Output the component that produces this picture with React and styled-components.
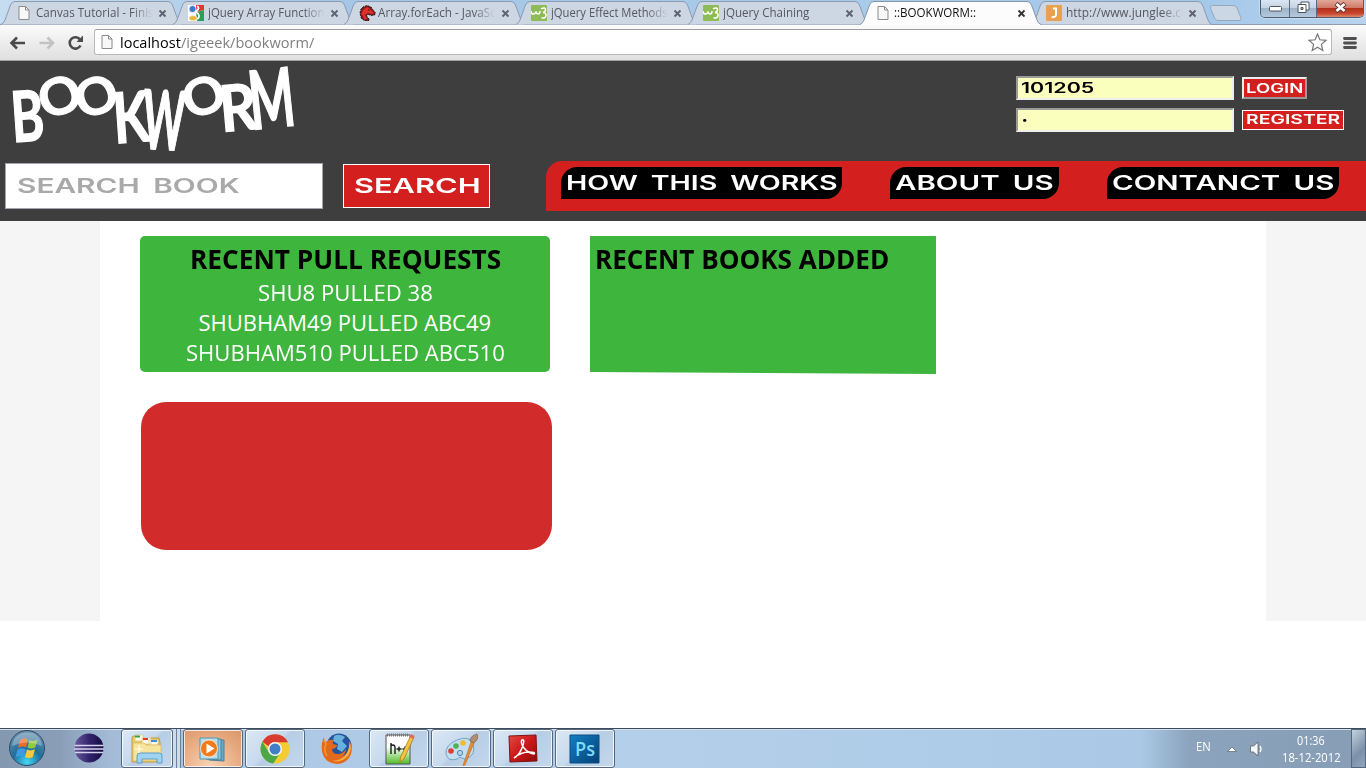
import React, { useLayoutEffect, useRef, useState } from "react";
import styled, { createGlobalStyle } from "styled-components";

const Global = createGlobalStyle`
  * { box-sizing: border-box; }
  body { margin: 0; background: #fff; font-family: "Open Sans", sans-serif; overflow: hidden; }
  svg { display: block; flex: none; }
`;

/* Text stretched horizontally to an exact width */
const FitBox = styled.span`
  display: block;
  flex: none;
  width: ${(p) => p.$w}px;
  white-space: nowrap;
`;
const FitInner = styled.span`
  display: inline-block;
  transform-origin: 0 50%;
`;
function Fit({ w, children }) {
  const ref = useRef(null);
  const [scale, setScale] = useState(1);
  useLayoutEffect(() => {
    setScale(w / ref.current.offsetWidth);
  }, [w]);
  return (
    <FitBox $w={w}>
      <FitInner ref={ref} style={{ transform: `scaleX(${scale})` }}>{children}</FitInner>
    </FitBox>
  );
}

const Page = styled.div`
  width: 1366px;
  height: 768px;
  display: flex;
  flex-direction: column;
`;

/* ---------- browser chrome ---------- */
const TabStrip = styled.div`
  height: 25px;
  display: flex;
  padding-left: 1px;
  position: relative;
  background: linear-gradient(90deg, #c5dcf1 0, #a5c6e6 25%, #a9cbea 60%, #a4c8ea 88%, #b9d3ec 100%);
  box-shadow: inset 0 -1px #8f9bab;
`;
const TabBox = styled.div`
  position: relative;
  width: 181px;
  height: 25px;
  margin-right: -9.3px;
  z-index: ${(p) => (p.$active ? 2 : 1)};
  flex: none;
`;
const TabShape = styled.svg`
  position: absolute;
  inset: 0;
`;
const TabContent = styled.div`
  position: relative;
  height: 25px;
  display: flex;
  align-items: center;
  padding: 1px 16px 0 15px;
`;
const TabTitle = styled.div`
  width: 118px;
  margin-left: ${(p) => p.$gap}px;
  overflow: hidden;
  font-size: 12px;
  line-height: 18px;
  color: ${(p) => (p.$active ? "#111" : "#56595f")};
  ${(p) => p.$fade && "mask-image: linear-gradient(90deg, #000 96px, transparent 117px);"}
`;
const CloseSlot = styled.div`
  margin-left: auto;
  margin-right: -1px;
`;
const NewTab = styled.svg`
  margin: 5px 0 0 6px;
`;
const WindowButtons = styled.div`
  position: absolute;
  right: 2px;
  top: 0;
  z-index: 3;
  height: 18px;
  width: 104px;
  display: flex;
  border: 1px solid #4e5e70;
  border-top: 0;
  border-radius: 0 0 5px 5px;
  overflow: hidden;
  box-shadow: 0 0 2px #fff;
`;
const WindowButton = styled.div`
  width: ${(p) => p.$w}px;
  display: flex;
  justify-content: center;
  align-items: center;
  padding-bottom: ${(p) => (p.$low ? 0 : 2)}px;
  border-left: ${(p) => (p.$sep ? "1px solid #5c6b7c" : "0")};
  background: ${(p) =>
    p.$close
      ? "linear-gradient(#e2a79a 0, #d07a68 45%, #b5301a 50%, #c9482e 80%, #e0886a 100%)"
      : "linear-gradient(#dbe6f1 0, #c4d3e3 45%, #9fb4ca 50%, #b5c9dd 100%)"};
`;
const Toolbar = styled.div`
  height: 36px;
  display: flex;
  align-items: center;
  padding: 0 9px;
  background: linear-gradient(#fbfbfb, #dfdfdf);
  border-bottom: 1px solid #a2a4a3;
`;
const AddressBar = styled.div`
  width: 1238px;
  height: 26px;
  margin: 0 11px 1px 9px;
  display: flex;
  align-items: center;
  padding: 0 4px 0 4px;
  background: #fff;
  border: 1px solid #b9b9b9;
  border-top-color: #9d9d9d;
  border-radius: 3px;
`;
const Address = styled.div`
  display: flex;
  flex: 1;
  margin-left: 5px;
  font-size: 15px;
  line-height: 22px;
  color: #808080;
  b { font-weight: 400; color: #000; }
`;

const PageIcon = () => (
  <svg width="16" height="16" viewBox="0 0 16 16">
    <path d="M3 1.5h6.5l3.5 3.5v9.5H3z" fill="#f8f8f8" stroke="#8b8b8b" />
    <path d="M9.5 1.5V5H13" fill="none" stroke="#8b8b8b" />
  </svg>
);
const GoogleIcon = () => (
  <svg width="16" height="16" viewBox="0 0 16 16">
    <rect width="16" height="16" fill="#fff" />
    <path d="M8 0h8v5L8 7z" fill="#e8332e" />
    <path d="M8 7l8-2v11H9z" fill="#2e9d58" />
    <path d="M0 4l6 3-2 4-4 1z" fill="#fff" />
    <circle cx="4.5" cy="4" r="3.5" fill="#3b78d8" stroke="#fff" strokeWidth=".7" />
    <path d="M9 1q3 2 0 4.500q-2 1 1 3q3 4-2 6" fill="none" stroke="#fff" strokeWidth="1.8" />
    <ellipse cx="5" cy="13.2" rx="4" ry="2.600" fill="#e8b43a" stroke="#fff" strokeWidth=".6" />
  </svg>
);
const DinoIcon = () => (
  <svg width="17" height="16" viewBox="0 0 17 16">
    <path d="M1 8l1-4 2-2 4-1.500 4 1.500 2 3 2.500 3-1 2-3 .5-3-1-2 1 1 2 2 2-2 2-3-1-3-2-1-3z" fill="#7d1a1a" stroke="#2b1a1a" strokeDasharray="2 1" />
    <path d="M4 5l4-3 3 2 4 4-2 1-4-1-3 2 2 4-3 .5-1-4-2-1z" fill="#df2f2d" />
    <path d="M9 5h1.500" stroke="#2b1a1a" />
  </svg>
);
const W3Icon = () => (
  <svg width="16" height="16" viewBox="0 0 16 16">
    <rect width="16" height="16" rx="1" fill="#8dbb55" />
    <path d="M0 6q.5 3.500 2.500 3Q4.500 9 4.800 6.500 5.500 9 7 9q2 0 2-3" fill="none" stroke="#fff" strokeWidth="1.500" />
    <path d="M10 3.800q4.500-2 4.500.8 0 2.500-2.500 2.800 3.200.2 3 3-.5 3.600-4.500 2.300" fill="none" stroke="#fff" strokeWidth="1.600" />
  </svg>
);
const JungleeIcon = () => (
  <svg width="16" height="16" viewBox="0 0 16 16">
    <rect width="16" height="16" rx="1" fill="#e9a04f" />
    <path d="M7 3.500h3v6q0 3-4.500 2.800" fill="none" stroke="#fff" strokeWidth="2" />
  </svg>
);
const CloseMark = ({ active }) => (
  <svg width="9" height="9" viewBox="0 0 9 9">
    <path d="M1.500 1.500l6 6M7.500 1.500l-6 6" stroke={active ? "#333" : "#5c626b"} strokeWidth="1.800" />
  </svg>
);

const TABS = [
  { icon: <PageIcon />, title: "Canvas Tutorial - Finis", w: 118, fade: true },
  { icon: <GoogleIcon />, title: "jQuery Array Functions", w: 122, fade: true },
  { icon: <DinoIcon />, title: "Array.forEach - JavaSc", w: 118, fade: true, gap: 2 },
  { icon: <W3Icon />, title: "jQuery Effect Methods", w: 117, fade: true },
  { icon: <W3Icon />, title: "jQuery Chaining", w: 86 },
  { icon: <PageIcon />, title: "::BOOKWORM::", w: 82, active: true, gap: 3 },
  { icon: <JungleeIcon />, title: "http://www.junglee.co", w: 122, fade: true },
];

function Tab({ icon, title, w, fade, active, gap = 4 }) {
  return (
    <TabBox $active={active}>
      <TabShape width="181" height="25" viewBox="0 0 181 25">
        <path
          d="M0 24.500Q3 23 4 20L9.500 5Q11 1.500 14 1.500H167Q170 1.500 171.500 5L177 20Q178 23.500 181 24.500"
          fill={active ? "#fcfcfc" : "#cdd6e3"}
          stroke={active ? "#8896a8" : "#8b9bb0"}
        />
        {active && <path d="M1 24.500H180" stroke="#fcfcfc" />}
      </TabShape>
      <TabContent>
        {icon}
        <TabTitle $gap={gap} $fade={fade} $active={active}>
          <Fit w={w}>{title}</Fit>
        </TabTitle>
        <CloseSlot><CloseMark active={active} /></CloseSlot>
      </TabContent>
    </TabBox>
  );
}

/* ---------- site header ---------- */
const Header = styled.header`
  height: 160px;
  background: #3e3e3e;
  display: flex;
  flex-direction: column;
`;
const HeaderTop = styled.div`
  height: 100px;
  display: flex;
  justify-content: space-between;
`;
const LogoText = styled.svg`
  overflow: visible;
  font-family: Lato, sans-serif;
  font-weight: 700;
  font-size: 100px;
  fill: #fff;
  stroke: #fff;
  stroke-width: 2px;
`;
const LoginForm = styled.form`
  width: 350px;
  padding-top: 15px;
  display: flex;
  flex-direction: column;
  gap: 8px;
`;
const FormRow = styled.div`
  height: 24px;
  display: flex;
  align-items: center;
  gap: 8px;
`;
const wide = `
  font-family: Inter, sans-serif;
  font-weight: 600;
  word-spacing: 4px;
`;
const Field = styled.div`
  ${wide}
  width: 218px;
  height: 24px;
  padding: 0 ${(p) => (p.$masked ? 4 : 3)}px;
  background: #faffbd;
  border: 2px solid;
  border-color: #9a9a9a #eee #eee #9a9a9a;
  color: #000;
  font-size: ${(p) => (p.$masked ? 9 : 14.5)}px;
  line-height: 20px;
`;
const SmallButton = styled.div`
  ${wide}
  height: ${(p) => (p.$raised ? 22 : 20)}px;
  padding: 0 ${(p) => (p.$raised ? 2 : 3)}px;
  background: #d3201f;
  color: #fff;
  font-size: 13px;
  line-height: ${(p) => (p.$raised ? 18 : 17)}px;
  border: ${(p) => (p.$raised ? "2px solid" : "1px solid #fff")};
  ${(p) => p.$raised && "border-color: #eee #9a9a9a #9a9a9a #eee;"}
`;
const HeaderBottom = styled.div`
  height: 60px;
  display: flex;
  padding-left: 5px;
`;
const SearchField = styled.div`
  ${wide}
  width: 318px;
  height: 46px;
  margin-top: 2px;
  padding-left: 11px;
  background: #fff;
  border: 1px solid #a5a5ad;
  color: #a9a9a9;
  font-size: 20px;
  line-height: 45px;
`;
const SearchButton = styled.div`
  ${wide}
  width: 147px;
  height: 44px;
  margin: 3px 56px 0 20px;
  padding-left: 10px;
  background: #d3201f;
  border: 1px solid #fff;
  color: #fff;
  font-size: 20px;
  line-height: 43px;
`;
const Nav = styled.nav`
  flex: 1;
  height: 50px;
  padding: 6px 0 0 15px;
  display: flex;
  gap: 48px;
  background: #d3201f;
  border-top-left-radius: 16px;
`;
const NavItem = styled.div`
  ${wide}
  height: 32px;
  padding: 0 5px;
  background: #000;
  color: #fff;
  font-size: 20px;
  line-height: 33px;
  border-radius: 16px 0 16px 0;
`;

const LOGO = [
  { c: "B", x: 27.5, y: 55, r: -4, sx: 0.5, sy: 0.7 },
  { c: "O", x: 59.5, y: 35, r: -20, sx: 0.53, sy: 0.51 },
  { c: "O", x: 96, y: 35, r: -20, sx: 0.53, sy: 0.51 },
  { c: "K", x: 131, y: 56, r: -4, sx: 0.53, sy: 0.7 },
  { c: "W", x: 164, y: 59, r: 3, sx: 0.4, sy: 0.82 },
  { c: "O", x: 203.5, y: 35, r: -20, sx: 0.53, sy: 0.51 },
  { c: "R", x: 238, y: 46.5, r: -5, sx: 0.58, sy: 0.64 },
  { c: "M", x: 271.5, y: 37.5, r: -6, sx: 0.48, sy: 0.81 },
];
const Logo = () => (
  <LogoText width="300" height="100" viewBox="0 0 300 100">
    {LOGO.map((l, i) => (
      <text key={i} textAnchor="middle" y="36" transform={`translate(${l.x} ${l.y}) rotate(${l.r}) scale(${l.sx} ${l.sy})`}>
        {l.c}
      </text>
    ))}
  </LogoText>
);

/* ---------- content ---------- */
const Gutters = styled.main`
  height: 400px;
  padding: 0 100px;
  background: #f5f5f5;
`;
const Content = styled.div`
  height: 400px;
  background: #fff;
  padding: 15px 40px 0;
`;
const CardRow = styled.div`
  display: flex;
  align-items: flex-start;
  gap: 40px;
`;
const PullCard = styled.section`
  width: 410px;
  height: 136px;
  padding-top: 5px;
  border-radius: 5px;
  background: #3eb63e;
  display: flex;
  flex-direction: column;
  align-items: center;
`;
const BooksCard = styled.section`
  width: 346px;
  height: 138px;
  padding: 5px 5px 0;
  background: #3eb63e;
  clip-path: polygon(0 0, 100% 0, 100% 100%, 0 136px);
`;
const CardTitle = styled.h2`
  margin: 0;
  font-size: 26px;
  line-height: 36px;
  font-weight: 700;
  color: #000;
`;
const Pull = styled.div`
  font-size: 22px;
  line-height: 30px;
  color: #fff;
`;
const RedPanel = styled.section`
  width: 411px;
  height: 148px;
  margin: 28px 0 0 1px;
  border-radius: 25px;
  background: #d22b2b;
`;
const Blank = styled.div`
  flex: 1;
`;

/* ---------- taskbar ---------- */
const Taskbar = styled.footer`
  height: 40px;
  display: flex;
  border-top: 1px solid #3d4b5c;
  box-shadow: inset 0 1px #d5e3f1;
  background: linear-gradient(90deg, #8498b0 0, #8a9eb8 60px, #a3bbd6 110px, #abc7e4 200px, #b4cfe9 620px, #abc9e7 1140px, #8ba3bc 1190px, #879db6 1366px);
`;
const StartCell = styled.div`
  width: 58px;
  padding: 0 0 0 8px;
`;
const TaskCell = styled.div`
  width: 62px;
  height: 39px;
  padding: 0 1px;
  display: flex;
`;
const TaskButton = styled.div`
  width: ${(p) => (p.$stack ? 52 : 60)}px;
  height: 39px;
  display: flex;
  align-items: center;
  justify-content: center;
  border: 1px solid transparent;
  border-radius: 3px;
  ${(p) =>
    p.$open &&
    `border-color: #56687d;
     box-shadow: inset 0 0 0 1px rgba(255,255,255,.75);
     background: ${
       p.$hot
         ? "radial-gradient(circle at 45% 100%, #f9d3b5, #e5a57b 70%, #d79468)"
         : "linear-gradient(135deg, #dce8f4 0, #c6d9ed 45%, #b6cde5 50%, #c4d8ec 100%)"
     };`}
`;
const StackEdge = styled.div`
  width: 4px;
  height: 39px;
  border-right: 1px solid #6d8098;
  background: #cbdced;
`;
const Tray = styled.div`
  margin-left: auto;
  display: flex;
  align-items: center;
  color: #fff;
  font-size: 12px;
  line-height: 17px;
`;
const Language = styled.div`
  margin: -5px 16px 0 0;
`;
const Clock = styled.div`
  width: 60px;
  margin: 0 10px 0 16px;
  display: flex;
  flex-direction: column;
  align-items: center;
`;
const ShowDesktop = styled.div`
  width: 15px;
  height: 39px;
  border: 1px solid #53677d;
  background: linear-gradient(135deg, #c3d1de, #7b91a9 60%, #92a7bc);
`;

const StartIcon = () => (
  <svg width="38" height="38" viewBox="0 0 38 38">
    <defs>
      <radialGradient id="orb" cx=".5" cy=".9" r=".9">
        <stop offset="0" stopColor="#45d8f5" /><stop offset=".45" stopColor="#1f6f9d" /><stop offset="1" stopColor="#6d93ad" />
      </radialGradient>
    </defs>
    <circle cx="19" cy="19" r="17.500" fill="url(#orb)" stroke="#2d4c65" />
    <path d="M12 11q4-3 8-.5l-2 8q-4-2-8 .5z" fill="#ee6a2e" />
    <path d="M21.500 11q4 2 8-.5l-2.200 8q-4 2-7.800 0z" fill="#93c93c" />
    <path d="M9.500 20.500q4-2.500 8 0l-2 7.500q-4-2-8 .5z" fill="#3e9be0" />
    <path d="M19 20.500q4 2 8-.5l-2.200 8q-4 2-7.800 0z" fill="#fbc936" />
    <path d="M4 17Q6 4 19 3.500T34 17Q19 10 4 17z" fill="#fff" opacity=".28" />
  </svg>
);
const EclipseIcon = () => (
  <svg width="32" height="32" viewBox="0 0 32 32">
    <defs><linearGradient id="ecl"><stop offset="0" stopColor="#6a5a9c" /><stop offset=".5" stopColor="#32246d" /><stop offset="1" stopColor="#140b40" /></linearGradient></defs>
    <circle cx="16" cy="15" r="14.500" fill="url(#ecl)" />
    <path d="M1.500 12.500h29M1 16h30M2 19.500h28" stroke="#d5d3ec" strokeWidth="1.300" />
  </svg>
);
const ExplorerIcon = () => (
  <svg width="34" height="34" viewBox="0 0 34 34">
    <path d="M2 6q0-2 2-2h8l1 3h6l2-1h8l1 4v20H2z" fill="#e8ca6b" stroke="#c29b3a" />
    <path d="M5 3h8v6H5zM12 6h9v6h-9zM19 8h9v5h-9z" fill="#fffbe8" stroke="#d8bf72" strokeWidth=".6" />
    <path d="M5 3.500h5v2H5z" fill="#36a346" /><path d="M13 6h5v2h-5z" fill="#d8402d" /><path d="M21 8h6v2h-6z" fill="#3591dc" />
    <path d="M3 11h11l2 2h15v16H3z" fill="#f7e49c" stroke="#d5b65c" strokeWidth=".7" />
    <path d="M7 31v-7q0-3 3-3h19q3 0 3 3v7h-5v-4H12v4z" fill="#9ed3f2" stroke="#5e9cc6" />
    <path d="M9 13v8M5 17h8" stroke="#fff" />
  </svg>
);
const MediaIcon = () => (
  <svg width="32" height="30" viewBox="0 0 32 30">
    <path d="M12 6h15v21l-15-1z" fill="#62aac9" stroke="#4a819f" />
    <path d="M9 5h15v21L9 25z" fill="#8ec6dc" stroke="#4a819f" />
    <path d="M3 4h18v21H3z" fill="#b5dfec" stroke="#5792ae" />
    <circle cx="12" cy="14.500" r="8.500" fill="#f27a1b" stroke="#fff2e0" strokeWidth=".8" />
    <path d="M9.500 9.500l8 5-8 5z" fill="#fff" />
  </svg>
);
const ChromeIcon = () => (
  <svg width="32" height="32" viewBox="0 0 32 32">
    <circle cx="16" cy="16" r="14.500" fill="#f4cb32" />
    <path d="M3.400 8.800A14.500 14.500 0 0 1 29 9.300H16a7 7 0 0 0-6.300 4z" fill="#d93b31" />
    <path d="M3.400 8.800A14.500 14.500 0 0 0 14.300 30.400l6-9.200A7 7 0 0 1 9.700 19z" fill="#4ba847" />
    <circle cx="16" cy="16" r="7" fill="#f6f6f6" /><circle cx="16" cy="16" r="5.500" fill="#3e7fc6" />
  </svg>
);
const FirefoxIcon = () => (
  <svg width="34" height="34" viewBox="0 0 34 34">
    <circle cx="19" cy="14" r="12.500" fill="#26539b" />
    <path d="M14 4q5-3 11 1l-3 4 5 5-5 6-5-3 1-5-5-3z" fill="#66b2dd" />
    <path d="M4 5q0 4 2 5 3-3 8-2-2 2-1 4l4 1q0 3-5 4 0 5 6 5 5 0 8-5 0 5-5 8 8-2 9-15 4 9-1 16-5 6-12 6Q4 31 2 19 1 11 4 5z" fill="#e36a1d" />
    <path d="M29 9q4 8-1 15-6 7-16 5 11-1 15-8 3-6 2-12z" fill="#f6b23d" />
    <path d="M4 8l2 4q-3 6 1 12" fill="none" stroke="#f29a34" strokeWidth="1.500" />
  </svg>
);
const NotepadIcon = () => (
  <svg width="34" height="34" viewBox="0 0 34 34">
    <defs><linearGradient id="npp" x2="0" y2="1"><stop offset=".4" stopColor="#fff" /><stop offset="1" stopColor="#4fbd27" /></linearGradient></defs>
    <path d="M4 3h24v29H4z" fill="url(#npp)" stroke="#555" />
    <path d="M5 3h22" stroke="#777" strokeWidth="3" strokeDasharray="1 1" />
    <path d="M9 22V11M9 13.500q4-1.500 4 2V22M14.500 17h5M17 14.500v5M20.500 17h5M23 14.500v5" fill="none" stroke="#1b1b1b" strokeWidth="1.400" />
    <path d="M29 3l3 2-10 22-4 3 .5-5z" fill="#f1c341" stroke="#a3701c" strokeWidth=".7" />
    <path d="M29 2l3.500 2-1.300 3-3.500-2z" fill="#e1695b" />
  </svg>
);
const PaintIcon = () => (
  <svg width="34" height="34" viewBox="0 0 34 34">
    <path d="M13 8q12-5 16 4 3 10-5 14-4 2-6 0t-5 1Q4 30 2 22 1 13 13 8z" fill="#c2def0" stroke="#72a5c8" />
    <circle cx="7" cy="19" r="2.800" fill="#dc3f34" /><circle cx="12" cy="14" r="2.800" fill="#52b157" />
    <circle cx="19" cy="11" r="2.800" fill="#f3bb2c" /><circle cx="16" cy="21" r="2.600" fill="#b5d5e9" stroke="#5684a8" />
    <path d="M27 10l3 1-9 22-2 .5z" fill="#e78d36" stroke="#b76a23" strokeWidth=".6" />
    <path d="M26 9q0-5 7-7 3 4-3 9z" fill="#b38e6c" stroke="#7c5d42" strokeWidth=".6" />
  </svg>
);
const AcrobatIcon = () => (
  <svg width="32" height="32" viewBox="0 0 32 32">
    <defs><linearGradient id="pdf" x2="1" y2="1"><stop stopColor="#e64a43" /><stop offset=".5" stopColor="#cb1719" /><stop offset="1" stopColor="#8d0b0f" /></linearGradient></defs>
    <path d="M2 3l27-1 1 26-27 1z" fill="url(#pdf)" stroke="#7d1213" />
    <path d="M7 25q6-3 9-13 2-6-1-5-2 3 2 8t10 6q2-2-5-2-8 0-15 6z" fill="none" stroke="#fff" strokeWidth="1.500" />
  </svg>
);
const PsLabel = styled.text`
  font: 600 20px "Open Sans", sans-serif;
  fill: #7fdcfc;
`;
const PhotoshopIcon = () => (
  <svg width="32" height="32" viewBox="0 0 32 32">
    <defs><linearGradient id="ps" x2="1" y2="1"><stop stopColor="#127fc4" /><stop offset="1" stopColor="#064177" /></linearGradient></defs>
    <path d="M1 2h29v28H1z" fill="url(#ps)" stroke="#0a4e84" />
    <PsLabel x="6" y="23" textLength="20" lengthAdjust="spacingAndGlyphs">Ps</PsLabel>
  </svg>
);

const TASKS = [
  { icon: <EclipseIcon /> },
  { icon: <ExplorerIcon />, open: true, stack: true },
  { icon: <MediaIcon />, open: true, hot: true },
  { icon: <ChromeIcon />, open: true },
  { icon: <FirefoxIcon /> },
  { icon: <NotepadIcon />, open: true },
  { icon: <PaintIcon />, open: true },
  { icon: <AcrobatIcon />, open: true },
  { icon: <PhotoshopIcon />, open: true },
];

const TrayIcons = () => (
  <svg width="38" height="20" viewBox="0 0 38 20">
    <path d="M.5 12.500l4.500-4.500 4.500 4.500z" fill="#fff" stroke="#5d6f84" strokeWidth=".8" />
    <path d="M23.500 7h3l4.500-4v14l-4.500-4h-3z" fill="#f7f7f7" stroke="#56616d" strokeWidth=".8" />
    <path d="M33 7q2 3 0 6" fill="none" stroke="#fff" strokeWidth="1.300" />
  </svg>
);

export default function App() {
  return (
    <Page>
      <Global />
      <TabStrip>
        {TABS.map((t) => <Tab key={t.title + t.w} {...t} />)}
        <NewTab width="34" height="17" viewBox="0 0 34 17">
          <path d="M3.500.5H24Q27 .5 28 3L32 13Q33 15.500 30 15.500H9Q6.500 15.500 5.500 13L1.500 3Q1 .5 3.500 .5z" fill="#cbd7e5" stroke="#98a8bb" />
        </NewTab>
        <WindowButtons>
          <WindowButton $w={28} $low>
            <svg width="13" height="6"><rect x=".5" y=".5" width="12" height="4.500" rx="1" fill="#fff" stroke="#4d5662" /></svg>
          </WindowButton>
          <WindowButton $w={27} $sep>
            <svg width="13" height="13" viewBox="0 0 13 13">
              <path d="M4 1h8v8H4z" fill="#fff" stroke="#4d5662" />
              <path d="M1 3.500h8v8H1z" fill="#fff" stroke="#4d5662" /><path d="M4 6.500h2v2H4z" fill="#a9bbcd" stroke="#4d5662" />
            </svg>
          </WindowButton>
          <WindowButton $w={47} $sep $close>
            <svg width="13" height="11" viewBox="0 0 13 11">
              <path d="M2 1.500l9 8M11 1.500l-9 8" stroke="#5a3535" strokeWidth="4.500" />
              <path d="M2.500 2l8 7M10.500 2l-8 7" stroke="#fff" strokeWidth="2.800" />
            </svg>
          </WindowButton>
        </WindowButtons>
      </TabStrip>

      <Toolbar>
        <svg width="76" height="18" viewBox="0 0 76 18">
          <path d="M8 3.500L2.500 9 8 14.500M3 9h13" fill="none" stroke="#4b4b4b" strokeWidth="2.600" />
          <path d="M38.500 3.500L44 9l-5.500 5.500M43.500 9h-13" fill="none" stroke="#c3c3c3" strokeWidth="2.600" />
          <path d="M71.500 11.500A5.700 5.700 0 1 1 71 5.500" fill="none" stroke="#4b4b4b" strokeWidth="2.600" />
          <path d="M74 1.500V8h-6.500z" fill="#4b4b4b" />
        </svg>
        <AddressBar>
          <PageIcon />
          <Address>
            <b><Fit w={61}>localhost</Fit></b>
            <Fit w={133}>/igeeek/bookworm/</Fit>
          </Address>
          <svg width="19" height="19" viewBox="0 0 19 19">
            <path d="M9.500 1l2.400 5.800 6.100.5-4.600 4.100 1.400 6.100-5.300-3.200-5.300 3.200 1.400-6.100L1 7.300l6.100-.5z" fill="#fff" stroke="#777" strokeWidth="1.200" />
          </svg>
        </AddressBar>
        <svg width="14" height="14" viewBox="0 0 14 14"><path d="M1.500 2.500h11M1.500 7h11M1.500 11.500h11" stroke="#4f4f4f" strokeWidth="2.800" strokeLinecap="round" /></svg>
      </Toolbar>

      <Header>
        <HeaderTop>
          <Logo />
          <LoginForm>
            <FormRow>
              <Field><Fit w={74}>101205</Fit></Field>
              <SmallButton $raised><Fit w={57}>LOGIN</Fit></SmallButton>
            </FormRow>
            <FormRow>
              <Field $masked><Fit w={6}>•</Fit></Field>
              <SmallButton><Fit w={94}>REGISTER</Fit></SmallButton>
            </FormRow>
          </LoginForm>
        </HeaderTop>
        <HeaderBottom>
          <SearchField><Fit w={222}>SEARCH BOOK</Fit></SearchField>
          <SearchButton><Fit w={126}>SEARCH</Fit></SearchButton>
          <Nav>
            <NavItem><Fit w={271}>HOW THIS WORKS</Fit></NavItem>
            <NavItem><Fit w={159}>ABOUT US</Fit></NavItem>
            <NavItem><Fit w={222}>CONTANCT US</Fit></NavItem>
          </Nav>
        </HeaderBottom>
      </Header>

      <Gutters>
        <Content>
          <CardRow>
            <PullCard>
              <CardTitle><Fit w={311}>RECENT PULL REQUESTS</Fit></CardTitle>
              <Pull><Fit w={175}>SHU8 PULLED 38</Fit></Pull>
              <Pull><Fit w={293}>SHUBHAM49 PULLED ABC49</Fit></Pull>
              <Pull><Fit w={319}>SHUBHAM510 PULLED ABC510</Fit></Pull>
            </PullCard>
            <BooksCard>
              <CardTitle><Fit w={294}>RECENT BOOKS ADDED</Fit></CardTitle>
            </BooksCard>
          </CardRow>
          <RedPanel />
        </Content>
      </Gutters>
      <Blank />

      <Taskbar>
        <StartCell><StartIcon /></StartCell>
        {TASKS.map((t, i) => (
          <TaskCell key={i}>
            <TaskButton $open={t.open} $hot={t.hot} $stack={t.stack}>{t.icon}</TaskButton>
            {t.stack && <><StackEdge /><StackEdge /></>}
          </TaskCell>
        ))}
        <Tray>
          <Language><Fit w={15}>EN</Fit></Language>
          <TrayIcons />
          <Clock>
            <Fit w={28}>01:36</Fit>
            <Fit w={59}>18-12-2012</Fit>
          </Clock>
          <ShowDesktop />
        </Tray>
      </Taskbar>
    </Page>
  );
}
